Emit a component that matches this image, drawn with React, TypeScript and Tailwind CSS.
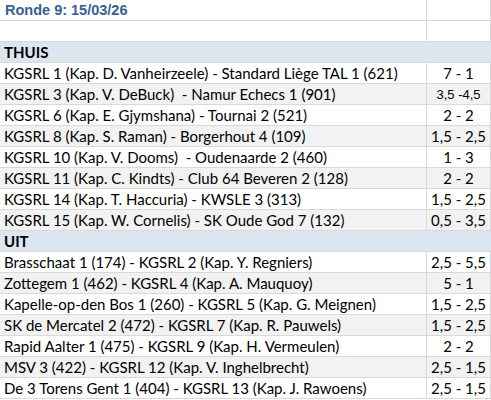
const thuis: [string, string][] = [
  ['KGSRL 1 (Kap. D. Vanheirzeele) - Standard Liège TAL 1 (621)', '7 - 1'],
  ['KGSRL 3 (Kap. V. DeBuck)  - Namur Echecs 1 (901)', '3,5 -4,5'],
  ['KGSRL 6 (Kap. E. Gjymshana) - Tournai 2 (521)', '2 - 2'],
  ['KGSRL 8 (Kap. S. Raman) - Borgerhout 4 (109)', '1,5 - 2,5'],
  ['KGSRL 10 (Kap. V. Dooms)  - Oudenaarde 2 (460)', '1 - 3'],
  ['KGSRL 11 (Kap. C. Kindts) - Club 64 Beveren 2 (128)', '2 - 2'],
  ['KGSRL 14 (Kap. T. Haccuria) - KWSLE 3 (313)', '1,5 - 2,5'],
  ['KGSRL 15 (Kap. W. Cornelis) - SK Oude God 7 (132)', '0,5 - 3,5'],
];

const uit: [string, string][] = [
  ['Brasschaat 1 (174) - KGSRL 2 (Kap. Y. Regniers)', '2,5 - 5,5'],
  ['Zottegem 1 (462) - KGSRL 4 (Kap. A. Mauquoy)', '5 - 1'],
  ['Kapelle-op-den Bos 1 (260) - KGSRL 5 (Kap. G. Meignen)', '1,5 - 2,5'],
  ['SK de Mercatel 2 (472) - KGSRL 7 (Kap. R. Pauwels)', '1,5 - 2,5'],
  ['Rapid Aalter 1 (475) - KGSRL 9 (Kap. H. Vermeulen)', '2 - 2'],
  ['MSV 3 (422) - KGSRL 12 (Kap. V. Inghelbrecht)', '2,5 - 1,5'],
  ['De 3 Torens Gent 1 (404) - KGSRL 13 (Kap. J. Rawoens)', '2,5 - 1,5'],
];

function Row({ left, right, grey }: { left: string; right: string; grey: boolean }) {
  const arial = right === '3,5 -4,5';
  return (
    <div className={`flex h-[21px] border-b border-[#d9d9d9] ${grey ? 'bg-[#f2f2f2]' : 'bg-white'}`}>
      <div className="w-[426px] shrink-0 pl-[4px] leading-[21px] whitespace-pre text-black">{left}</div>
      <div
        className={`flex-1 border-l border-r border-[#d9d9d9] text-center leading-[21px] text-black ${
          arial ? "font-['Liberation_Sans',sans-serif] text-[13px]" : ''
        }`}
      >
        {right}
      </div>
    </div>
  );
}

function Section({ label }: { label: string }) {
  return (
    <div className="flex h-[21px] border-b border-[#d9d9d9] bg-[#dce6f1]">
      <div className="pl-[4px] font-bold leading-[21px] text-black">{label}</div>
    </div>
  );
}

export default function App() {
  return (
    <div className="w-[491px] h-[400px] overflow-hidden bg-white font-['Lato',sans-serif] text-[15px]">
      <div className="flex h-[21px] border-b border-[#d9d9d9]">
        <div className="w-[426px] shrink-0 pl-[5px] font-['Liberation_Sans',sans-serif] text-[14.5px] font-bold leading-[21px] text-[#376091]">
          Ronde 9: 15/03/26
        </div>
        <div className="flex-1 border-l border-r border-[#d9d9d9]" />
      </div>
      <div className="flex h-[21px] border-b border-[#d9d9d9]">
        <div className="w-[426px] shrink-0" />
        <div className="flex-1 border-l border-r border-[#d9d9d9]" />
      </div>
      <Section label="THUIS" />
      {thuis.map(([l, r], i) => (
        <Row key={l} left={l} right={r} grey={i % 2 === 1} />
      ))}
      <Section label="UIT" />
      {uit.map(([l, r], i) => (
        <Row key={l} left={l} right={r} grey={i % 2 === 1} />
      ))}
    </div>
  );
}
